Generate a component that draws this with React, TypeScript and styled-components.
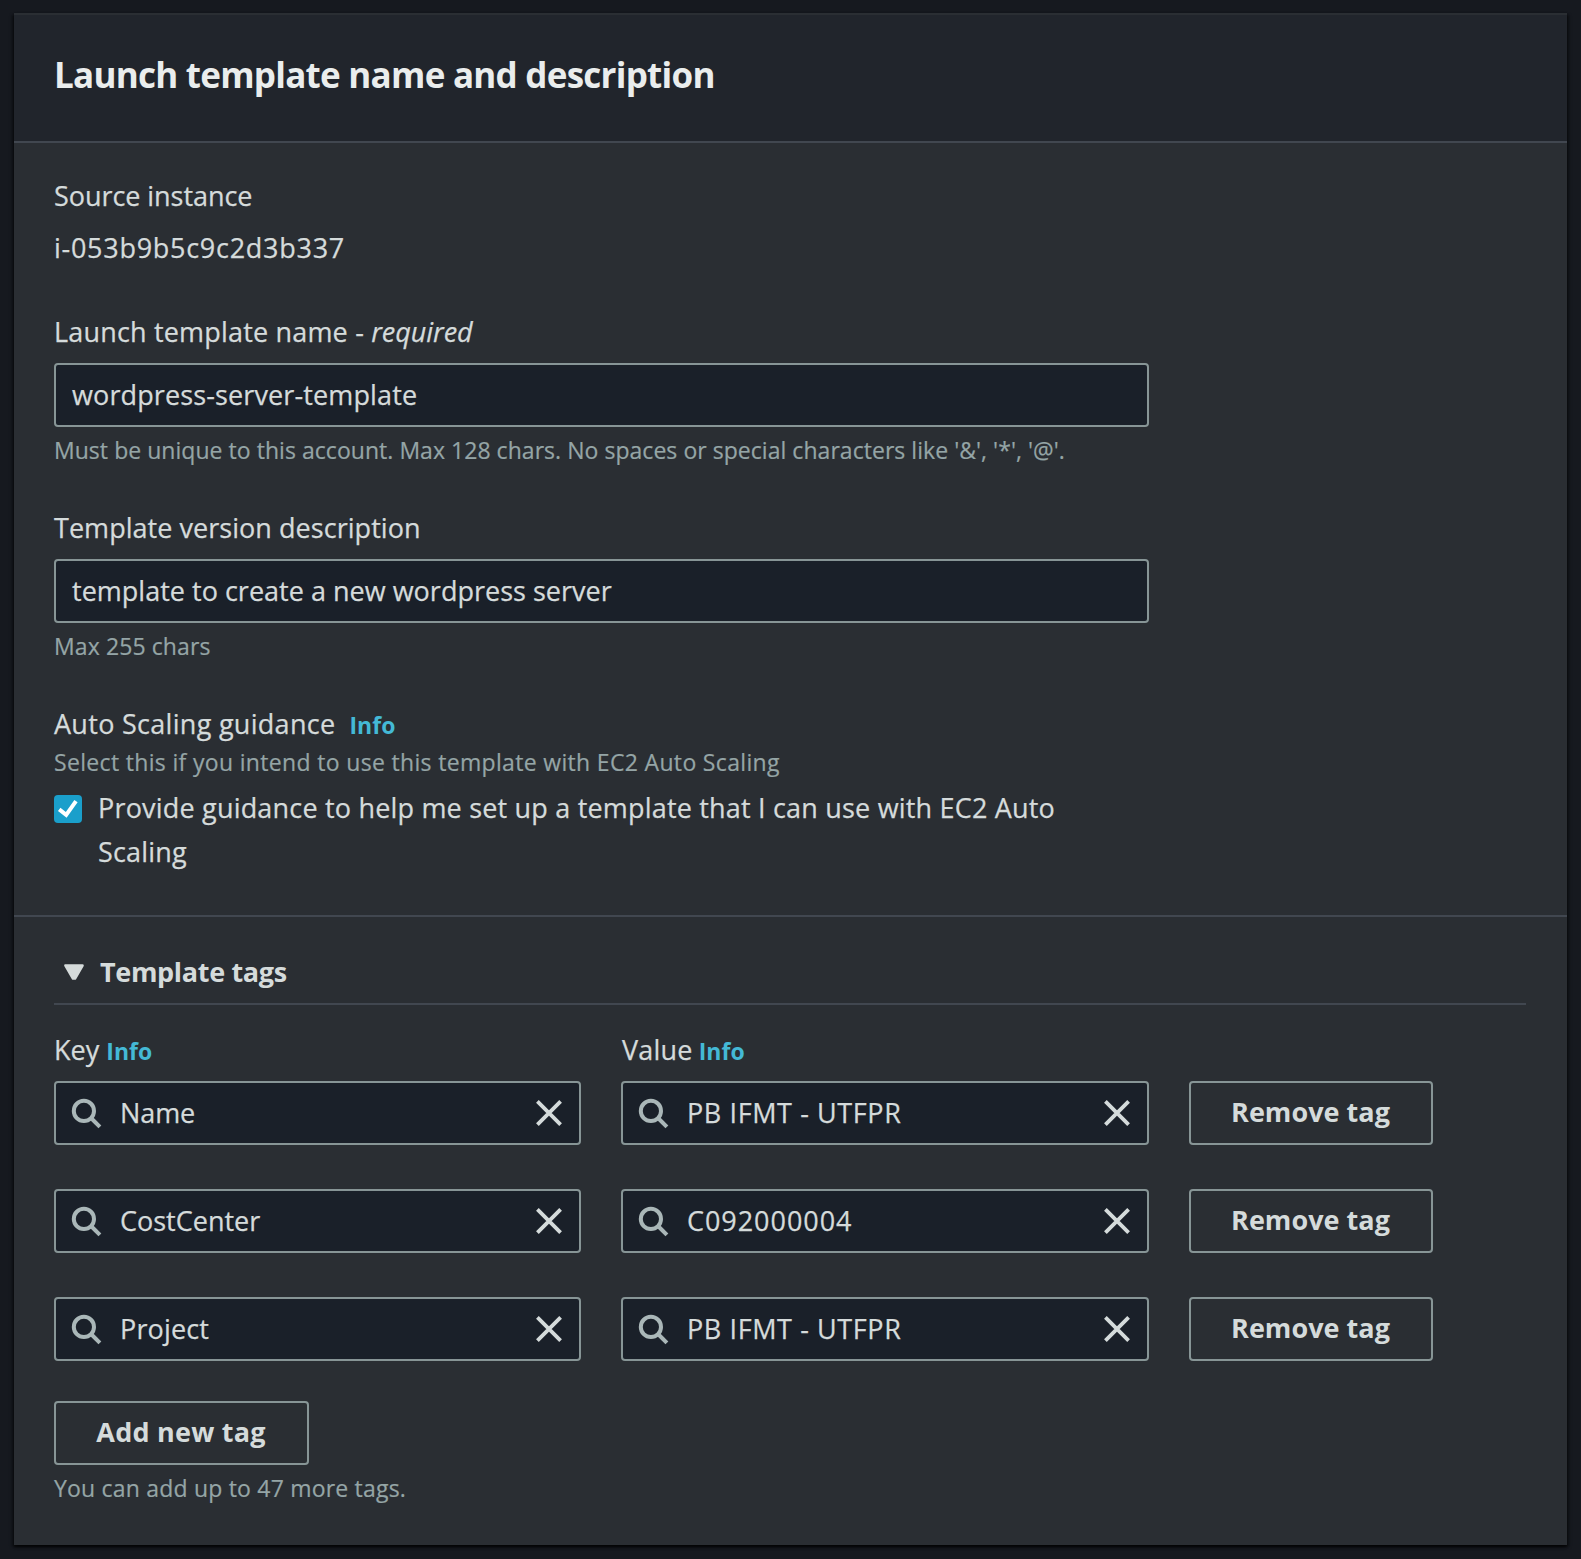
import React from "react";
import styled, { createGlobalStyle, ThemeProvider } from "styled-components";

const theme = {
  page: "#16191f",
  header: "#21252c",
  panel: "#2a2e33",
  field: "#1a2029",
  line: "#414750",
  outline: "#879596",
  heading: "#eaeded",
  text: "#d5dbdb",
  muted: "#95a5a6",
  icon: "#aab7b8",
  link: "#44b9d6",
  accent: "#1a9fcb",
};
type Theme = typeof theme;
type P = { theme: Theme };
const c = (key: keyof Theme) => (p: any) => (p as P).theme[key];

const GlobalStyle = createGlobalStyle`
  *, *::before, *::after { box-sizing: border-box; }
  body {
    margin: 0;
    background: ${theme.page};
    font-family: "Open Sans", "Noto Sans", sans-serif;
  }
`;

interface Tracked {
  $track?: number;
}
const track = (p: Tracked) => `${p.$track ?? 0}px`;

const Page = styled.main`
  min-height: 1559px;
  padding: 13px 14px 14px;
`;

const Card = styled.section`
  width: 1553px;
  height: 1532px;
  background: ${c("panel")};
  border-top: 2px solid ${c("panel")};
  box-shadow: 0 2px 2px rgba(0, 0, 0, 0.5), 2px 2px 3px rgba(0, 0, 0, 0.4),
    -2px 2px 3px rgba(0, 0, 0, 0.4);
`;

const CardHeader = styled.header`
  height: 128px;
  padding: 36px 40px 0;
  background: ${c("header")};
  border-bottom: 2px solid ${c("line")};
`;

const Title = styled.h2<Tracked>`
  margin: 0;
  font-size: 35px;
  line-height: 48px;
  font-weight: 700;
  letter-spacing: ${track};
  color: ${c("heading")};
`;

const Details = styled.div`
  display: flex;
  flex-direction: column;
  gap: 43px;
  padding: 34px 40px 41px;
  border-bottom: 2px solid ${c("line")};
`;

const Field = styled.div`
  width: 1095px;
`;

const SourceField = styled(Field)`
  display: flex;
  flex-direction: column;
  gap: 15px;
  padding-bottom: 4px;
`;

const Text = styled.div<Tracked>`
  font-size: 27px;
  line-height: 37px;
  letter-spacing: ${track};
  -webkit-text-stroke: 0.25px;
  white-space: nowrap;
  color: ${c("text")};
`;

const Required = styled.i<Tracked>`
  letter-spacing: ${track};
`;

const LabelRow = styled.div<{ $gap: number; $indent?: number }>`
  display: flex;
  align-items: baseline;
  gap: ${(p) => p.$gap}px;
  height: 37px;
  padding-left: ${(p) => p.$indent ?? 0}px;
`;

const InfoLink = styled.a`
  font-size: 23px;
  line-height: 32px;
  font-weight: 700;
  letter-spacing: 0.05px;
  color: ${c("link")};
  cursor: pointer;
`;

const TextBox = styled.div<Tracked>`
  height: 64px;
  margin: 13px 0 7px;
  padding: 11px 16px 0;
  font-size: 27px;
  line-height: 37px;
  letter-spacing: ${track};
  -webkit-text-stroke: 0.25px;
  white-space: nowrap;
  color: ${c("text")};
  background: ${c("field")};
  border: 2px solid ${c("outline")};
  border-radius: 4px;
`;

const Hint = styled.div<Tracked & { $top?: number }>`
  margin-top: ${(p) => p.$top ?? 0}px;
  font-size: 23px;
  line-height: 32px;
  letter-spacing: ${track};
  -webkit-text-stroke: 0.2px;
  white-space: nowrap;
  color: ${c("muted")};
`;

const CheckRow = styled.label`
  display: flex;
  gap: 16px;
  margin-top: 8px;
`;

const CheckBox = styled.span`
  flex: none;
  width: 28px;
  height: 28px;
  margin-top: 9px;
  background: ${c("accent")};
  border-radius: 4px;

  svg {
    display: block;
  }
`;

const CheckText = styled.span<Tracked>`
  font-size: 27px;
  line-height: 44px;
  letter-spacing: ${track};
  -webkit-text-stroke: 0.25px;
  color: ${c("text")};
`;

const Tags = styled.div`
  padding: 36px 40px 0;
`;

const TagsHeader = styled.h3<Tracked>`
  display: flex;
  align-items: center;
  gap: 16px;
  width: 1472px;
  height: 52px;
  margin: 0 0 26px;
  padding: 0 0 13px 10px;
  font-size: 27px;
  line-height: 37px;
  font-weight: 700;
  letter-spacing: ${track};
  color: ${c("text")};
  border-bottom: 2px solid ${c("line")};
`;

const TagGrid = styled.div`
  display: grid;
  grid-template-columns: 527px 528px 244px;
  column-gap: 40px;
`;

const TagLabels = styled(TagGrid)`
  margin-bottom: 13px;
`;

const TagRows = styled.div`
  display: flex;
  flex-direction: column;
  gap: 44px;
  margin-bottom: 40px;
`;

const SearchBox = styled.div`
  display: flex;
  align-items: center;
  height: 64px;
  padding: 0 17px 0 14px;
  background: ${c("field")};
  border: 2px solid ${c("outline")};
  border-radius: 4px;

  svg {
    flex: none;
  }
`;

const SearchText = styled(Text)`
  flex: 1;
  margin: 0 0 1px 18px;
`;

const Button = styled.button<Tracked & { $width: number }>`
  display: block;
  width: ${(p) => p.$width}px;
  height: 64px;
  padding: 0 1px 3px 0;
  font-family: inherit;
  font-size: 27px;
  line-height: 37px;
  font-weight: 700;
  letter-spacing: ${track};
  color: ${c("text")};
  background: transparent;
  border: 2px solid ${c("outline")};
  border-radius: 4px;
`;

const SearchIcon = () => (
  <svg width="32" height="32" viewBox="0 0 32 32" fill="none" stroke={theme.icon} strokeWidth="4">
    <circle cx="13.9" cy="13.9" r="10.1" />
    <path d="M21 21L29.9 29.9" />
  </svg>
);

const CloseIcon = () => (
  <svg width="26" height="26" viewBox="0 0 26 26" stroke={theme.text} strokeWidth="3.8">
    <path d="M1.4 1.4L24.6 24.6M24.6 1.4L1.4 24.6" />
  </svg>
);

const CaretIcon = () => (
  <svg width="20" height="16" viewBox="0 0 20 16">
    <path
      d="M1.5 1.5H18.5L11 14.5H9Z"
      fill={theme.text}
      stroke={theme.text}
      strokeWidth="2.6"
      strokeLinejoin="round"
    />
  </svg>
);

const CheckIcon = () => (
  <svg width="28" height="28" viewBox="0 0 28 28" fill="none" stroke="#fff" strokeWidth="4">
    <path d="M5.2 14.4L12.2 19.8L22 6.2" />
  </svg>
);

const Search = ({ value, spacing }: { value: string; spacing: number }) => (
  <SearchBox>
    <SearchIcon />
    <SearchText $track={spacing}>{value}</SearchText>
    <CloseIcon />
  </SearchBox>
);

const tags = [
  { key: "Name", keyTrack: -0.1, value: "PB IFMT - UTFPR", valueTrack: 0.6 },
  { key: "CostCenter", keyTrack: 0, value: "C092000004", valueTrack: 0.95 },
  { key: "Project", keyTrack: 0.15, value: "PB IFMT - UTFPR", valueTrack: 0.6 },
];

export default function App() {
  return (
    <ThemeProvider theme={theme}>
      <GlobalStyle />
      <Page>
        <Card>
          <CardHeader>
            <Title $track={-0.74}>Launch template name and description</Title>
          </CardHeader>
          <Details>
            <SourceField>
              <Text $track={-0.06}>Source instance</Text>
              <Text $track={0.72}>i-053b9b5c9c2d3b337</Text>
            </SourceField>
            <Field>
              <Text $track={0.18}>
                Launch template name - <Required $track={-0.05}>required</Required>
              </Text>
              <TextBox $track={0.12}>wordpress-server-template</TextBox>
              <Hint $track={0.04}>
                Must be unique to this account. Max 128 chars. No spaces or special characters like '&amp;',
                '*', '@'.
              </Hint>
            </Field>
            <Field>
              <Text $track={0.04}>Template version description</Text>
              <TextBox $track={0.01}>template to create a new wordpress server</TextBox>
              <Hint $track={0.1}>Max 255 chars</Hint>
            </Field>
            <Field>
              <LabelRow $gap={14}>
                <Text $track={0.29}>Auto Scaling guidance</Text>
                <InfoLink>Info</InfoLink>
              </LabelRow>
              <Hint $top={4} $track={0.33}>
                Select this if you intend to use this template with EC2 Auto Scaling
              </Hint>
              <CheckRow>
                <CheckBox>
                  <CheckIcon />
                </CheckBox>
                <CheckText $track={0.19}>
                  Provide guidance to help me set up a template that I can use with EC2 Auto
                  <br />
                  Scaling
                </CheckText>
              </CheckRow>
            </Field>
          </Details>
          <Tags>
            <TagsHeader $track={-0.33}>
              <CaretIcon />
              Template tags
            </TagsHeader>
            <TagLabels>
              <LabelRow $gap={7}>
                <Text>Key</Text>
                <InfoLink>Info</InfoLink>
              </LabelRow>
              <LabelRow $gap={6} $indent={1}>
                <Text $track={0.2}>Value</Text>
                <InfoLink>Info</InfoLink>
              </LabelRow>
            </TagLabels>
            <TagRows>
              {tags.map((tag) => (
                <TagGrid key={tag.key}>
                  <Search value={tag.key} spacing={tag.keyTrack} />
                  <Search value={tag.value} spacing={tag.valueTrack} />
                  <Button $width={244} $track={0.03}>
                    Remove tag
                  </Button>
                </TagGrid>
              ))}
            </TagRows>
            <Button $width={255} $track={0.22}>
              Add new tag
            </Button>
            <Hint $top={7} $track={0.2}>
              You can add up to 47 more tags.
            </Hint>
          </Tags>
        </Card>
      </Page>
    </ThemeProvider>
  );
}
